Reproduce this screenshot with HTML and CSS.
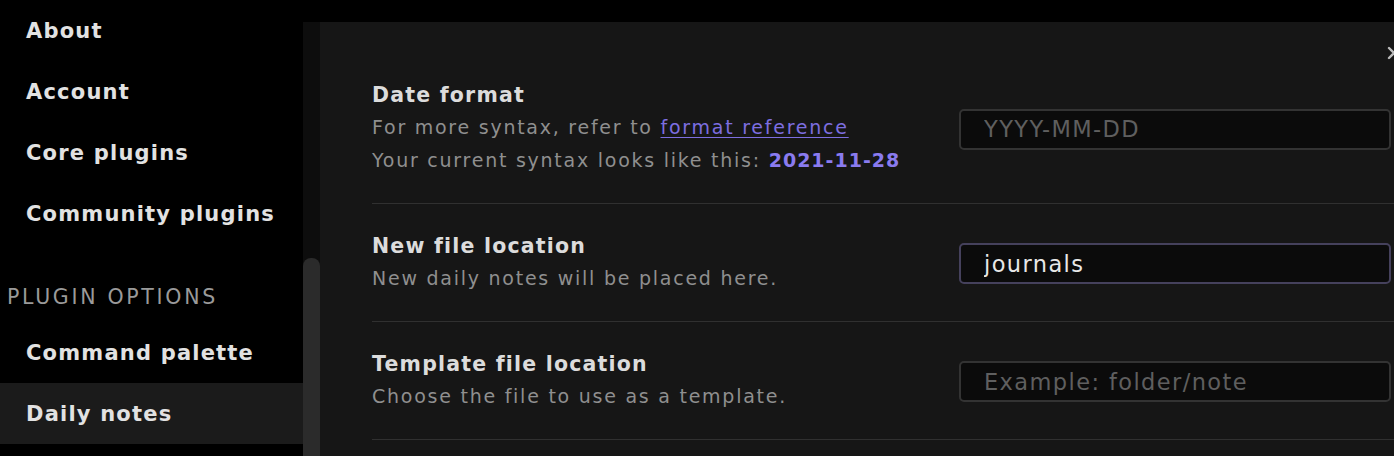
FILE: index.html
```html
<!DOCTYPE html>
<html>
<head>
<meta charset="utf-8">
<link rel="stylesheet" href="styles.css">
</head>
<body>
<div class="app">
  <nav class="sidebar">
    <div class="nav-item">About</div>
    <div class="nav-item">Account</div>
    <div class="nav-item">Core plugins</div>
    <div class="nav-item">Community plugins</div>
    <div class="nav-header">PLUGIN OPTIONS</div>
    <div class="nav-item">Command palette</div>
    <div class="nav-item active">Daily notes</div>
  </nav>
  <div class="track"><div class="thumb"></div></div>
  <main class="panel">
    <svg class="close" width="16" height="16" viewBox="0 0 16 16"><path d="M3 3 L13 13 M13 3 L3 13" stroke="#bdbdbd" stroke-width="2.4" stroke-linecap="round"/></svg>
    <section class="setting">
      <div class="info">
        <div class="name">Date format</div>
        <div class="desc">For more syntax, refer to <a class="link">format reference</a></div>
        <div class="desc">Your current syntax looks like this: <b class="accent">2021-11-28</b></div>
      </div>
      <div class="control"><input class="field" placeholder="YYYY-MM-DD"></div>
    </section>
    <section class="setting">
      <div class="info">
        <div class="name">New file location</div>
        <div class="desc">New daily notes will be placed here.</div>
      </div>
      <div class="control"><input class="field focused" value="journals"></div>
    </section>
    <section class="setting">
      <div class="info">
        <div class="name">Template file location</div>
        <div class="desc">Choose the file to use as a template.</div>
      </div>
      <div class="control"><input class="field" placeholder="Example: folder/note"></div>
    </section>
  </main>
</div>
</body>
</html>
```

FILE: styles.css
```css
* { box-sizing: border-box; }
html, body { margin: 0; height: 100%; background: #000; overflow: hidden; }
body { font-family: "DejaVu Sans", Inter, sans-serif; color: #dadada; }
.app { display: flex; height: 456px; }
.sidebar { width: 303px; flex: none; background: #000; }
.nav-item { height: 61px; display: flex; align-items: center; padding-left: 26px; font-size: 21px; font-weight: 700; color: #e2e2e2; letter-spacing: 1.2px; }
.nav-item.active { background: #1b1b1b; }
.nav-header { padding: 40px 0 12px 7px; line-height: 26px; font-size: 20.5px; font-weight: 400; color: #9a9a9a; letter-spacing: 2.7px; }
.track { width: 17px; flex: none; margin-top: 22px; background: #0d0d0d; padding-top: 236px; }
.thumb { height: 220px; background: #2b2b2b; border-radius: 8px 8px 0 0; }
.panel { position: relative; flex: 1; margin-top: 22px; background: #161616; padding: 31px 0 0 52px; }
.close { position: absolute; top: 23px; right: -8px; }
.setting { display: flex; align-items: center; padding: 28px 3px 26px 0; border-bottom: 1px solid #303030; }
.info { flex: 1; }
.name { font-size: 20.5px; line-height: 28px; font-weight: 700; color: #dcdcdc; letter-spacing: 1.2px; }
.desc { font-size: 19px; line-height: 33px; color: #8f8f8f; letter-spacing: 1.75px; }
.name + .desc { margin-top: 2px; }
.link { color: #7d6ee0; text-decoration: underline; text-underline-offset: 3px; }
.accent { color: #8a7bef; font-weight: 700; letter-spacing: 1px; }
.control { flex: none; }
.field { width: 432px; height: 41px; background: #0b0b0b; border: 2px solid #333; border-radius: 5px; padding: 0 0 0 23px; font-family: "DejaVu Sans", Inter, sans-serif; font-size: 22.5px; color: #e8e8e8; outline: none; letter-spacing: 1.4px; }
.field::placeholder { color: #5f5f5f; }
.field.focused { border-color: #45415c; }
```
